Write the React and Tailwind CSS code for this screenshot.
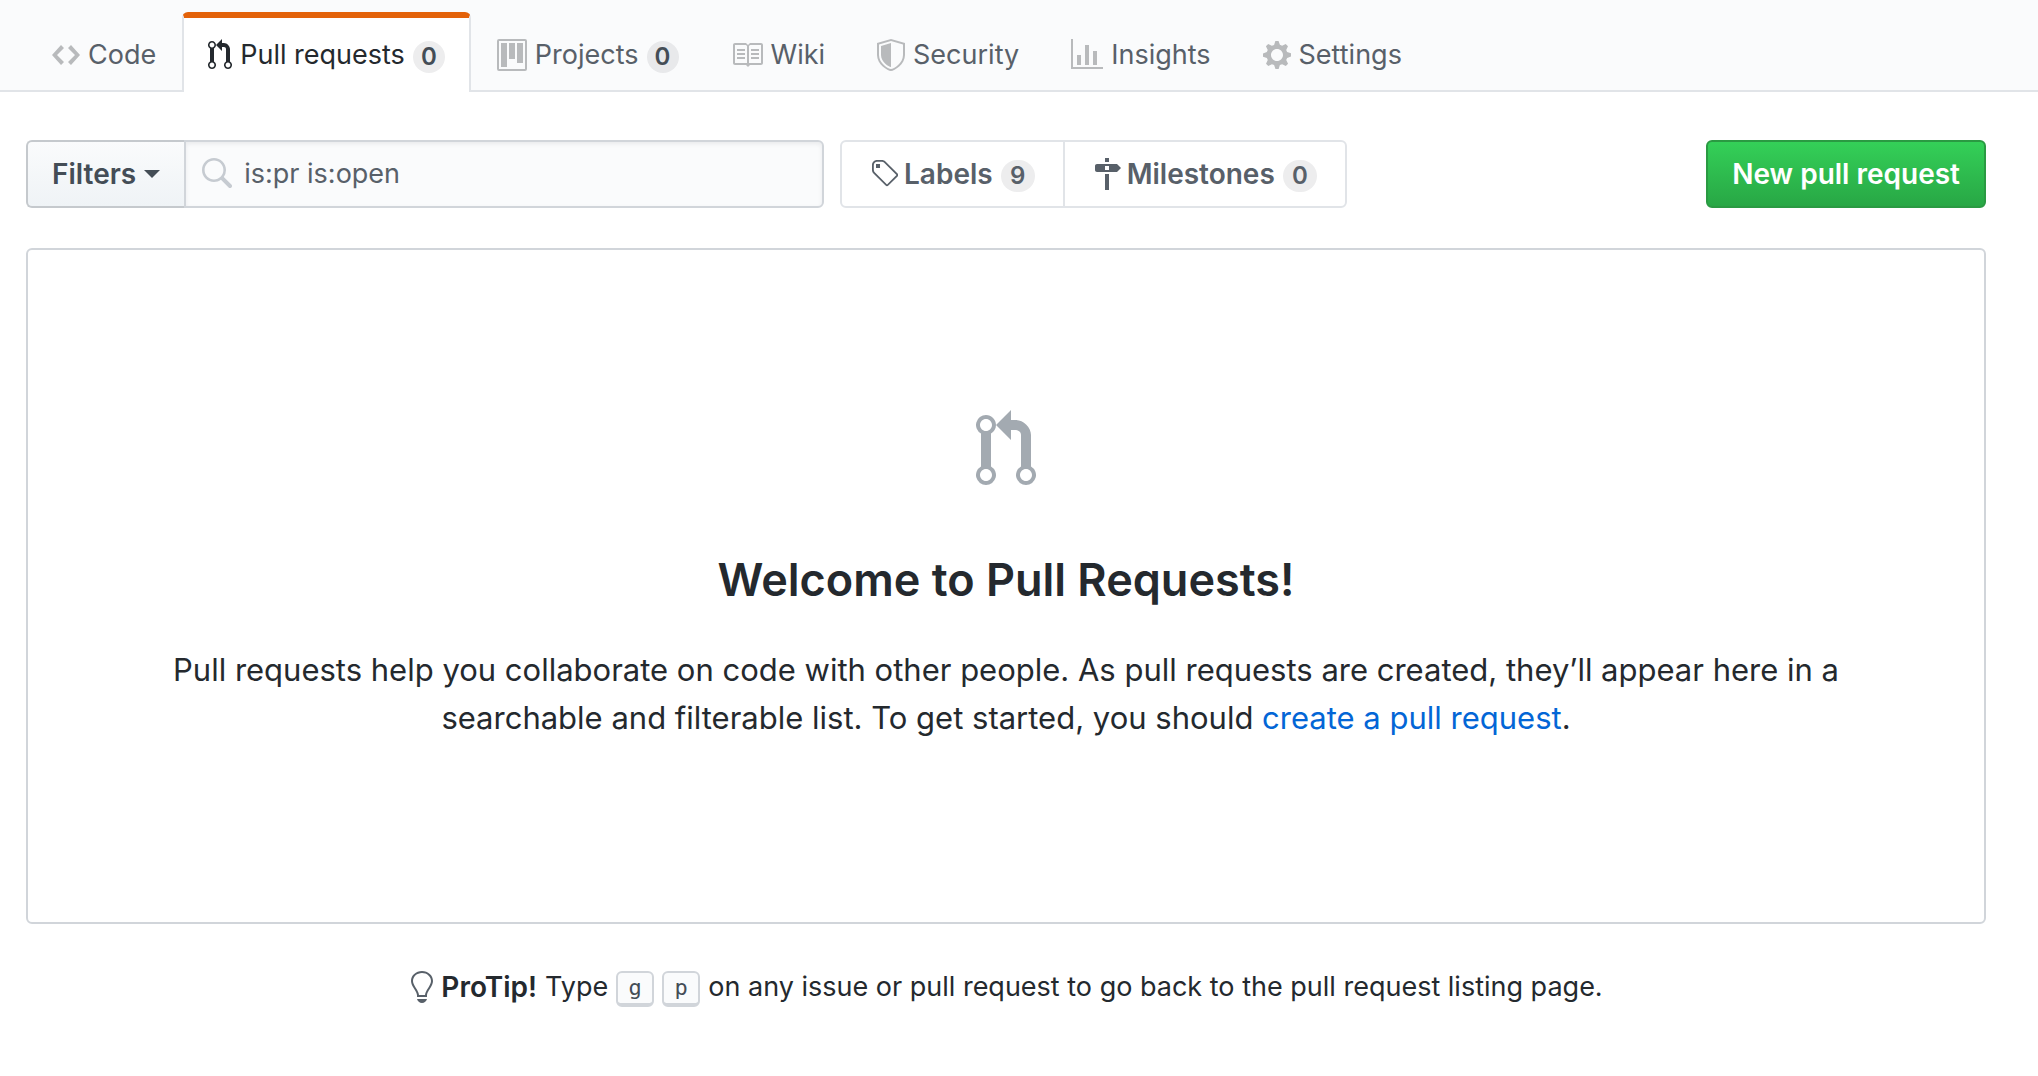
import React from "react";

const ICONS = {
  code: [14, "M9.5 3L8 4.5 11.5 8 8 11.5 9.5 13 14 8 9.5 3zm-5 0L0 8l4.5 5L6 11.5 2.5 8 6 4.5 4.5 3z"],
  pull: [12, "M11 11.28V5c-.03-.78-.34-1.47-.94-2.06C9.46 2.35 8.78 2.03 8 2H7V0L4 3l3 3V4h1c.27.02.48.11.69.31.21.2.3.42.31.69v6.28A1.993 1.993 0 0 0 10 15a1.993 1.993 0 0 0 1-3.72zm-1 2.92c-.66 0-1.2-.55-1.2-1.2 0-.65.55-1.2 1.2-1.2.65 0 1.2.55 1.2 1.2 0 .65-.55 1.2-1.2 1.2zM4 3c0-1.11-.89-2-2-2a1.993 1.993 0 0 0-1 3.72v6.56A1.993 1.993 0 0 0 2 15a1.993 1.993 0 0 0 1-3.72V4.72c.59-.34 1-.98 1-1.72zm-.8 10c0 .66-.55 1.2-1.2 1.2-.65 0-1.2-.55-1.2-1.2 0-.65.55-1.2 1.2-1.2.65 0 1.2.55 1.2 1.2zM2 4.2C1.34 4.2.8 3.65.8 3c0-.65.55-1.2 1.2-1.2.65 0 1.2.55 1.2 1.2 0 .65-.55 1.2-1.2 1.2z"],
  project: [15, "M10 12h3V2h-3v10zm-4-2h3V2H6v8zm-4 4h3V2H2v12zm-1 1h13V1H1v14zM14 0H1a1 1 0 0 0-1 1v14a1 1 0 0 0 1 1h13a1 1 0 0 0 1-1V1a1 1 0 0 0-1-1z"],
  book: [16, "M3 5h4v1H3V5zm0 3h4V7H3v1zm0 2h4V9H3v1zm11-5h-4v1h4V5zm0 2h-4v1h4V7zm0 2h-4v1h4V9zm2-6v9c0 .55-.45 1-1 1H9.5l-1 1-1-1H2c-.55 0-1-.45-1-1V3c0-.55.45-1 1-1h5.5l1 1 1-1H15c.55 0 1 .45 1 1zm-8 .5L7.5 3H2v9h6V3.5zm7-.5H9.5l-.5.5V12h6V3z"],
  shield: [14, "M0 2l7-2 7 2v6.02C14 12.69 8.69 16 7 16c-1.69 0-7-3.31-7-7.98V2zm1 .75L7 1l6 1.75v5.268C13 12.104 8.449 15 7 15c-1.449 0-6-2.896-6-6.982V2.75zm1 .75L7 2v12c-1.207 0-5-2.482-5-5.985V3.5z"],
  graph: [16, "M16 14v1H0V0h1v14h15zM5 13H3V8h2v5zm4 0H7V3h2v10zm4 0h-2V6h2v7z"],
  gear: [14, "M14 8.77v-1.6l-1.94-.64-.45-1.09.88-1.84-1.13-1.13-1.81.91-1.09-.45-.69-1.92h-1.6l-.63 1.94-1.11.45-1.84-.88-1.13 1.13.91 1.81-.45 1.09L0 7.23v1.59l1.94.64.45 1.09-.88 1.84 1.13 1.13 1.81-.91 1.09.45.69 1.92h1.59l.63-1.94 1.11-.45 1.84.88 1.13-1.13-.92-1.81.47-1.09L14 8.75v.02zM7 11c-1.66 0-3-1.34-3-3s1.34-3 3-3 3 1.34 3 3-1.34 3-3 3z"],
  tag: [14, "M7.73 1.73C7.26 1.26 6.62 1 5.96 1H3.5C2.13 1 1 2.13 1 3.5v2.47c0 .66.27 1.3.73 1.77l6.06 6.06c.39.39 1.02.39 1.41 0l4.59-4.59a.996.996 0 0 0 0-1.41L7.73 1.73zM2.38 7.09c-.31-.3-.47-.7-.47-1.13V3.5c0-.88.72-1.59 1.59-1.59h2.47c.42 0 .83.16 1.13.47l6.14 6.13-4.73 4.73-6.13-6.15zM3.01 3h2v2H3V3h.01z"],
  milestone: [14, "M8 2H6V0h2v2zm4 5H2c-.55 0-1-.45-1-1V4c0-.55.45-1 1-1h10l2 2-2 2zM8 4H6v2h2V4zM6 16h2V8H6v8z"],
  search: [16, "M15.7 13.3l-3.81-3.83A5.93 5.93 0 0 0 13 6c0-3.31-2.69-6-6-6S1 2.69 1 6s2.69 6 6 6c1.3 0 2.48-.41 3.47-1.11l3.83 3.81c.19.2.45.3.7.3.25 0 .52-.09.7-.3a.996.996 0 0 0 0-1.41v.01zM7 10.7c-2.59 0-4.7-2.11-4.7-4.7 0-2.59 2.11-4.7 4.7-4.7 2.59 0 4.7 2.11 4.7 4.7 0 2.59-2.11 4.7-4.7 4.7z"],
  bulb: [12, "M6.5 0C3.48 0 1 2.19 1 5c0 .92.55 2.25 1 3 1.34 2.25 1.78 2.78 2 4v1h5v-1c.22-1.22.66-1.75 2-4 .45-.75 1-2.08 1-3 0-2.81-2.48-5-5.5-5zm3.64 7.48c-.25.44-.47.8-.67 1.11-.86 1.41-1.25 2.06-1.45 3.23-.02.05-.02.11-.02.17H5c0-.06 0-.13-.02-.17-.2-1.17-.59-1.83-1.45-3.23-.2-.31-.42-.67-.67-1.11C2.44 6.78 2 5.65 2 5c0-2.2 2.02-4 4.5-4 1.22 0 2.36.42 3.22 1.19C10.55 2.94 11 3.94 11 5c0 .66-.44 1.78-.86 2.48zM4 14h5c-.23 1.14-1.3 2-2.5 2s-2.27-.86-2.5-2z"],
};

function Icon({ name, className = "h-8" }) {
  const [width, d] = ICONS[name];
  return (
    <svg viewBox={`0 0 ${width} 16`} className={`${className} w-auto shrink-0 fill-current`} aria-hidden="true">
      <path fillRule="evenodd" d={d} />
    </svg>
  );
}

function Counter({ children, className = "min-w-8 text-[#444d56]" }) {
  return (
    <span className={`mt-1 ml-2 inline-flex h-8 items-center justify-center rounded-full bg-[#1b1f23]/8 text-[24px] leading-none font-semibold ${className}`}>
      {children}
    </span>
  );
}

const TABS = [
  { label: "Code", icon: "code" },
  { label: "Pull requests", icon: "pull", count: 0, selected: true },
  { label: "Projects", icon: "project", count: 0 },
  { label: "Wiki", icon: "book" },
  { label: "Security", icon: "shield" },
  { label: "Insights", icon: "graph" },
  { label: "Settings", icon: "gear" },
];

function Tab({ label, icon, count, selected }) {
  const base = "flex items-center whitespace-nowrap rounded-t-md border-x-2 border-t-6 px-6 ";
  const state = selected
    ? "border-x-[#e1e4e8] border-t-[#e36209] bg-white text-[#24292e]"
    : "border-transparent text-[#586069]";
  return (
    <a href="#" aria-current={selected ? "page" : undefined} className={base + state}>
      <span className={selected ? "mr-2" : "mr-2 text-[#b8babc]"}>
        <Icon name={icon} />
      </span>
      {label}
      {count !== undefined && <Counter>{count}</Counter>}
    </a>
  );
}

function Key({ children }) {
  return (
    <kbd className="mt-1 flex h-9 w-[38px] items-center justify-center rounded-md border-2 border-b-4 border-[#d1d5da] bg-[#fafbfc] font-['DejaVu_Sans_Mono',monospace] text-[22px] leading-none text-[#444d56]">
      {children}
    </kbd>
  );
}

export default function App() {
  return (
    <div className="min-h-screen bg-white font-['Inter',sans-serif] text-[27px] leading-[42px] text-[#24292e]">
      <header className="bg-[#fafbfc] pt-3 shadow-[inset_0_-2px_0_#e1e4e8]">
        <nav aria-label="Repository" className="flex h-20 pl-[26px]">
          {TABS.map((tab) => (
            <Tab key={tab.label} {...tab} />
          ))}
        </nav>
      </header>

      <main className="pt-12 pr-[52px] pl-[26px]">
        <div className="flex items-stretch">
          <form className="flex h-[68px] w-[798px]" onSubmit={(e) => e.preventDefault()}>
            <button
              type="button"
              className="flex items-center gap-2 rounded-l-md border-2 border-r-0 border-[#c5c9cd] bg-linear-to-b from-[#fafbfc] to-[#eff3f6] px-6 text-[28px] font-semibold text-[#444d56]"
            >
              Filters
              <svg viewBox="0 0 16 8" className="w-4" aria-hidden="true">
                <path d="M0 0h16L8 8z" fill="currentColor" />
              </svg>
            </button>
            <label className="flex min-w-0 flex-1 items-center gap-3 rounded-r-md border-2 border-[#d1d5da] bg-[#fafbfc] pl-3.5 shadow-[inset_0_2px_4px_rgba(27,31,35,0.075)]">
              <span className="text-[#c6cbd1]">
                <Icon name="search" />
              </span>
              <input
                type="text"
                aria-label="Search all pull requests"
                defaultValue="is:pr is:open"
                className="min-w-0 flex-1 bg-transparent text-[#586069] outline-none"
              />
            </label>
          </form>

          <nav aria-label="Issue metadata" className="ml-4 flex rounded-md border-2 border-[#e1e4e8] text-[28px] font-semibold text-[#586069]">
            <a href="#" className="flex items-center border-r-2 border-[#e1e4e8] px-7">
              <Icon name="tag" />
              <span className="ml-1.5">Labels</span>
              <Counter className="min-w-[34px] text-[#586069]">9</Counter>
            </a>
            <a href="#" className="flex items-center px-7">
              <Icon name="milestone" />
              <span className="ml-1.5">Milestones</span>
              <Counter className="min-w-[34px] text-[#586069]">0</Counter>
            </a>
          </nav>

          <button
            type="button"
            className="ml-auto rounded-md border-2 border-[#2a9a42] bg-linear-to-b from-[#34d058] to-[#28a745] px-6 text-[28px] font-semibold text-white"
          >
            New pull request
          </button>
        </div>

        <section className="mt-10 flex flex-col items-center rounded-md border-2 border-[#d1d5da] px-32 pt-40 pb-45 text-center">
          <span className="text-[#a3aab1]">
            <Icon name="pull" className="h-20" />
          </span>
          <h1 className="mt-[54px] text-[45px] leading-[72px] font-semibold">Welcome to Pull Requests!</h1>
          <p className="mt-[30px] text-[31px] leading-12">
            Pull requests help you collaborate on code with other people. As pull requests are created, they’ll appear here in a
            searchable and filterable list. To get started, you should{" "}
            <a href="#" className="text-[#0366d6]">
              create a pull request
            </a>
            .
          </p>
        </section>

        <p className="mt-[42px] flex items-center justify-center gap-2">
          <span className="text-[#586069]">
            <Icon name="bulb" />
          </span>
          <strong className="text-[28px] font-semibold">ProTip!</strong>
          <span>Type</span>
          <Key>g</Key>
          <Key>p</Key>
          <span>on any issue or pull request to go back to the pull request listing page.</span>
        </p>
      </main>
    </div>
  );
}
